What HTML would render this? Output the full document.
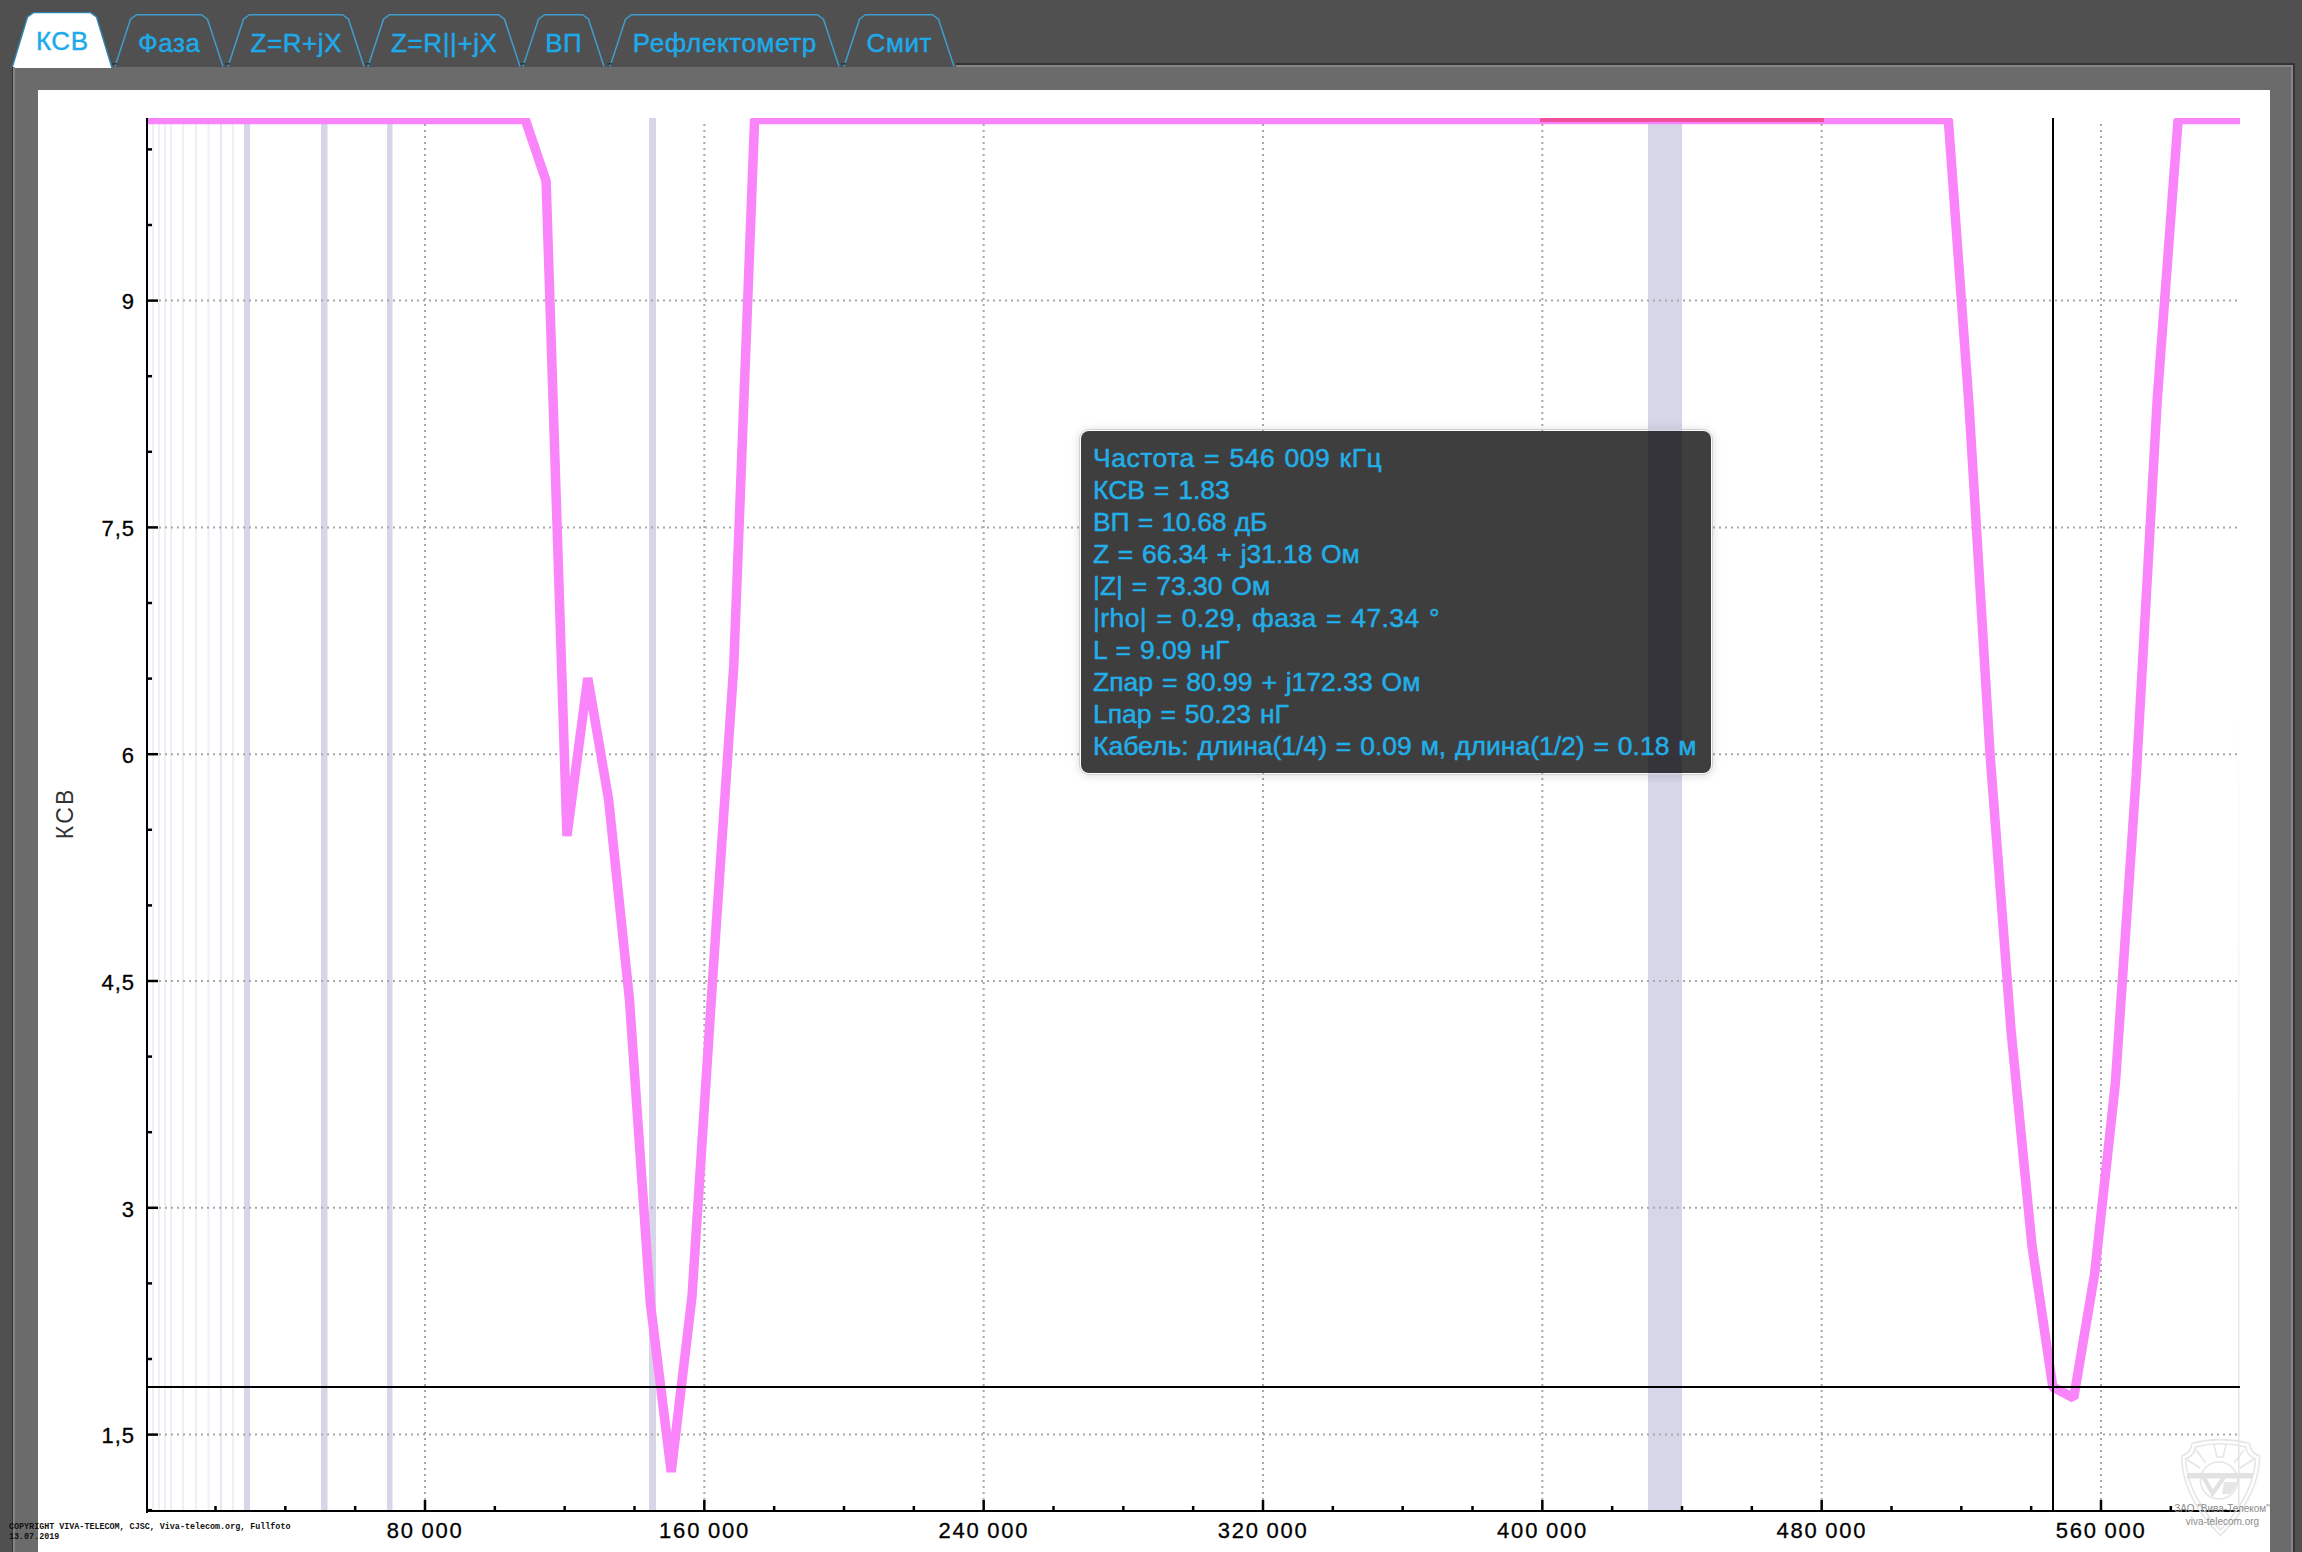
<!DOCTYPE html><html><head><meta charset="utf-8"><style>
html,body{margin:0;padding:0;background:#505050;width:2302px;height:1552px;overflow:hidden;}
svg{position:absolute;left:0;top:0;}
text{font-family:"Liberation Sans",sans-serif;}
#tip{position:absolute;left:1079px;top:429px;width:632px;height:344px;border:1px solid #d0d0d0;border-radius:10px;box-shadow:0 1px 10px rgba(0,0,0,0.14);}
#tipin{position:absolute;left:1px;top:1px;right:1px;bottom:1px;border-radius:8px;background:#3e3e3e;overflow:hidden;}
#tiptext{position:absolute;left:13px;top:12px;font-family:"Liberation Sans",sans-serif;font-size:26.5px;line-height:32px;word-spacing:1.5px;color:#22aee8;-webkit-text-stroke:0.5px #22aee8;white-space:pre;}
#copy{position:absolute;left:9px;top:1521.5px;font-family:"Liberation Mono",monospace;font-weight:bold;font-size:8.4px;line-height:10.5px;color:#111;white-space:pre;}
</style></head><body>
<svg width="2302" height="1552" viewBox="0 0 2302 1552">
<rect x="12" y="63" width="2283" height="1489" fill="#333"/>
<rect x="13" y="65" width="2280" height="1487" fill="#858585"/>
<rect x="15" y="67" width="2276" height="1485" fill="#6b6b6b"/>
<rect x="38" y="90" width="2232" height="1462" fill="#ffffff"/>
<rect x="12" y="60" width="944" height="7" fill="#505050"/>
<polygon points="12,68 27.5,17.0 33.5,12.6 90.5,12.6 96.5,17.0 112,68" fill="#ffffff"/>
<polyline points="12,68 27.5,17.0 33.5,12.6 90.5,12.6 96.5,17.0 112,68" fill="none" stroke="#2f86b0" stroke-width="1.4"/>
<text x="62.3" y="49.8" font-size="26" fill="#1eaaea" stroke="#1eaaea" stroke-width="0.45" letter-spacing="0.6" text-anchor="middle">КСВ</text>
<polyline points="115,66.5 130.5,19.2 136.5,14.7 201.5,14.7 207.5,19.2 223,66.5" fill="none" stroke="#3f9dcc" stroke-width="1.5"/>
<rect x="112" y="63" width="5" height="1.6" fill="#2a3a44"/>
<text x="169.3" y="51.7" font-size="26" fill="#1eaaea" stroke="#1eaaea" stroke-width="0.45" letter-spacing="0.6" text-anchor="middle">Фаза</text>
<polyline points="228,66.5 243.5,19.2 249.5,14.7 342.5,14.7 348.5,19.2 364,66.5" fill="none" stroke="#3f9dcc" stroke-width="1.5"/>
<rect x="225" y="63" width="5" height="1.6" fill="#2a3a44"/>
<text x="296.3" y="51.7" font-size="26" fill="#1eaaea" stroke="#1eaaea" stroke-width="0.45" letter-spacing="0.6" text-anchor="middle">Z=R+jX</text>
<polyline points="368,66.5 383.5,19.2 389.5,14.7 498.5,14.7 504.5,19.2 520,66.5" fill="none" stroke="#3f9dcc" stroke-width="1.5"/>
<rect x="365" y="63" width="5" height="1.6" fill="#2a3a44"/>
<text x="444.3" y="51.7" font-size="26" fill="#1eaaea" stroke="#1eaaea" stroke-width="0.45" letter-spacing="0.6" text-anchor="middle">Z=R&#124;&#124;+jX</text>
<polyline points="523,66.5 538.5,19.2 544.5,14.7 582.5,14.7 588.5,19.2 604,66.5" fill="none" stroke="#3f9dcc" stroke-width="1.5"/>
<rect x="520" y="63" width="5" height="1.6" fill="#2a3a44"/>
<text x="563.8" y="51.7" font-size="26" fill="#1eaaea" stroke="#1eaaea" stroke-width="0.45" letter-spacing="0.6" text-anchor="middle">ВП</text>
<polyline points="610,66.5 625.5,19.2 631.5,14.7 817.5,14.7 823.5,19.2 839,66.5" fill="none" stroke="#3f9dcc" stroke-width="1.5"/>
<rect x="607" y="63" width="5" height="1.6" fill="#2a3a44"/>
<text x="724.8" y="51.7" font-size="26" fill="#1eaaea" stroke="#1eaaea" stroke-width="0.45" letter-spacing="0.6" text-anchor="middle">Рефлектометр</text>
<polyline points="844,66.5 859.5,19.2 865.5,14.7 932.5,14.7 938.5,19.2 954,66.5" fill="none" stroke="#3f9dcc" stroke-width="1.5"/>
<rect x="841" y="63" width="5" height="1.6" fill="#2a3a44"/>
<text x="899.3" y="51.7" font-size="26" fill="#1eaaea" stroke="#1eaaea" stroke-width="0.45" letter-spacing="0.6" text-anchor="middle">Смит</text>
<rect x="956" y="63" width="1338" height="2" fill="#333"/>
<rect x="12" y="67" width="3" height="1485" fill="#333"/>
<rect x="13" y="67" width="2" height="1485" fill="#858585"/>
<rect x="152" y="118" width="2" height="1393" fill="#efeff6"/>
<rect x="158" y="118" width="2" height="1393" fill="#efeff6"/>
<rect x="164" y="118" width="2" height="1393" fill="#efeff6"/>
<rect x="170" y="118" width="2" height="1393" fill="#efeff6"/>
<rect x="182" y="118" width="2" height="1393" fill="#efeff6"/>
<rect x="195" y="118" width="2" height="1393" fill="#efeff6"/>
<rect x="207.5" y="118" width="2" height="1393" fill="#efeff6"/>
<rect x="220" y="118" width="2" height="1393" fill="#efeff6"/>
<rect x="232" y="118" width="2" height="1393" fill="#efeff6"/>
<rect x="220" y="118" width="2" height="1393" fill="#e6e6f0"/>
<rect x="244" y="118" width="6" height="1393" fill="#d6d6e8"/>
<rect x="321" y="118" width="6.5" height="1393" fill="#d6d6e8"/>
<rect x="387" y="118" width="5.5" height="1393" fill="#d6d6e8"/>
<rect x="649" y="118" width="7" height="1393" fill="#d6d6e8"/>
<rect x="1648" y="118" width="34" height="1393" fill="#d6d6e8"/>
<line x1="159" y1="300.60000000000014" x2="2238" y2="300.60000000000014" stroke="#a8a8a8" stroke-width="2" stroke-dasharray="2 4"/>
<line x1="159" y1="527.4000000000001" x2="2238" y2="527.4000000000001" stroke="#a8a8a8" stroke-width="2" stroke-dasharray="2 4"/>
<line x1="159" y1="754.2000000000002" x2="2238" y2="754.2000000000002" stroke="#a8a8a8" stroke-width="2" stroke-dasharray="2 4"/>
<line x1="159" y1="981.0000000000001" x2="2238" y2="981.0000000000001" stroke="#a8a8a8" stroke-width="2" stroke-dasharray="2 4"/>
<line x1="159" y1="1207.8000000000002" x2="2238" y2="1207.8000000000002" stroke="#a8a8a8" stroke-width="2" stroke-dasharray="2 4"/>
<line x1="159" y1="1434.6000000000001" x2="2238" y2="1434.6000000000001" stroke="#a8a8a8" stroke-width="2" stroke-dasharray="2 4"/>
<line x1="425.0" y1="124" x2="425.0" y2="1500" stroke="#a8a8a8" stroke-width="2" stroke-dasharray="2 4"/>
<line x1="704.3333333333333" y1="124" x2="704.3333333333333" y2="1500" stroke="#a8a8a8" stroke-width="2" stroke-dasharray="2 4"/>
<line x1="983.6666666666666" y1="124" x2="983.6666666666666" y2="1500" stroke="#a8a8a8" stroke-width="2" stroke-dasharray="2 4"/>
<line x1="1263.0" y1="124" x2="1263.0" y2="1500" stroke="#a8a8a8" stroke-width="2" stroke-dasharray="2 4"/>
<line x1="1542.3333333333333" y1="124" x2="1542.3333333333333" y2="1500" stroke="#a8a8a8" stroke-width="2" stroke-dasharray="2 4"/>
<line x1="1821.6666666666667" y1="124" x2="1821.6666666666667" y2="1500" stroke="#a8a8a8" stroke-width="2" stroke-dasharray="2 4"/>
<line x1="2101.0" y1="124" x2="2101.0" y2="1500" stroke="#a8a8a8" stroke-width="2" stroke-dasharray="2 4"/>
<defs><linearGradient id="rb" x1="0" y1="0" x2="0" y2="1"><stop offset="0" stop-color="#ffffff"/><stop offset="1" stop-color="#e2e2e2"/></linearGradient></defs>
<rect x="2238" y="700" width="1.5" height="811" fill="url(#rb)"/>
<defs><clipPath id="pc"><rect x="147" y="118" width="2093" height="1393"/></clipPath></defs>
<g clip-path="url(#pc)"><polyline points="147,119.5 525.25,119.5 546.1,181 566.95,836 587.8,678 608.65,800 629.5,1000 650.35,1303 671.2,1472 692.05,1296 712.9,975 733.75,666 754.6,119.5 1948.3,119.5 1969.2,408 1990.1,755 2011.0,1030 2031.9,1245 2052.8,1387 2073.7,1398 2094.6,1274 2115.4,1083 2136.3,775 2157.2,400 2178.1,119.5 2240,119.5" fill="none" stroke="#fa84fa" stroke-width="9.5" stroke-linejoin="bevel"/></g>
<rect x="1540" y="118" width="284" height="4" fill="#f24f9e"/>
<rect x="147" y="1386" width="2093" height="2" fill="#000"/>
<rect x="2052" y="118" width="2" height="1393" fill="#000"/>
<rect x="146" y="118" width="2" height="1395" fill="#000"/>
<rect x="146" y="1510" width="2094" height="2" fill="#000"/>
<rect x="147" y="1508.95" width="5" height="2.5" fill="#000"/>
<rect x="147" y="1433.3500000000001" width="11" height="2.5" fill="#000"/>
<rect x="147" y="1357.75" width="5" height="2.5" fill="#000"/>
<rect x="147" y="1282.15" width="5" height="2.5" fill="#000"/>
<rect x="147" y="1206.5500000000002" width="11" height="2.5" fill="#000"/>
<rect x="147" y="1130.9500000000003" width="5" height="2.5" fill="#000"/>
<rect x="147" y="1055.3500000000001" width="5" height="2.5" fill="#000"/>
<rect x="147" y="979.7500000000001" width="11" height="2.5" fill="#000"/>
<rect x="147" y="904.1500000000001" width="5" height="2.5" fill="#000"/>
<rect x="147" y="828.5500000000002" width="5" height="2.5" fill="#000"/>
<rect x="147" y="752.9500000000002" width="11" height="2.5" fill="#000"/>
<rect x="147" y="677.3500000000001" width="5" height="2.5" fill="#000"/>
<rect x="147" y="601.7500000000002" width="5" height="2.5" fill="#000"/>
<rect x="147" y="526.1500000000001" width="11" height="2.5" fill="#000"/>
<rect x="147" y="450.5500000000002" width="5" height="2.5" fill="#000"/>
<rect x="147" y="374.9500000000003" width="5" height="2.5" fill="#000"/>
<rect x="147" y="299.35000000000014" width="11" height="2.5" fill="#000"/>
<rect x="147" y="223.75000000000023" width="5" height="2.5" fill="#000"/>
<rect x="147" y="148.1500000000001" width="5" height="2.5" fill="#000"/>
<rect x="214.25" y="1506" width="2.5" height="5" fill="#000"/>
<rect x="284.08333333333337" y="1506" width="2.5" height="5" fill="#000"/>
<rect x="353.9166666666667" y="1506" width="2.5" height="5" fill="#000"/>
<rect x="423.75" y="1500" width="2.5" height="11" fill="#000"/>
<rect x="493.5833333333333" y="1506" width="2.5" height="5" fill="#000"/>
<rect x="563.4166666666666" y="1506" width="2.5" height="5" fill="#000"/>
<rect x="633.25" y="1506" width="2.5" height="5" fill="#000"/>
<rect x="703.0833333333333" y="1500" width="2.5" height="11" fill="#000"/>
<rect x="772.9166666666667" y="1506" width="2.5" height="5" fill="#000"/>
<rect x="842.75" y="1506" width="2.5" height="5" fill="#000"/>
<rect x="912.5833333333333" y="1506" width="2.5" height="5" fill="#000"/>
<rect x="982.4166666666666" y="1500" width="2.5" height="11" fill="#000"/>
<rect x="1052.25" y="1506" width="2.5" height="5" fill="#000"/>
<rect x="1122.0833333333335" y="1506" width="2.5" height="5" fill="#000"/>
<rect x="1191.9166666666665" y="1506" width="2.5" height="5" fill="#000"/>
<rect x="1261.75" y="1500" width="2.5" height="11" fill="#000"/>
<rect x="1331.5833333333335" y="1506" width="2.5" height="5" fill="#000"/>
<rect x="1401.4166666666665" y="1506" width="2.5" height="5" fill="#000"/>
<rect x="1471.25" y="1506" width="2.5" height="5" fill="#000"/>
<rect x="1541.0833333333333" y="1500" width="2.5" height="11" fill="#000"/>
<rect x="1610.9166666666667" y="1506" width="2.5" height="5" fill="#000"/>
<rect x="1680.75" y="1506" width="2.5" height="5" fill="#000"/>
<rect x="1750.5833333333333" y="1506" width="2.5" height="5" fill="#000"/>
<rect x="1820.4166666666667" y="1500" width="2.5" height="11" fill="#000"/>
<rect x="1890.25" y="1506" width="2.5" height="5" fill="#000"/>
<rect x="1960.0833333333333" y="1506" width="2.5" height="5" fill="#000"/>
<rect x="2029.9166666666667" y="1506" width="2.5" height="5" fill="#000"/>
<rect x="2099.75" y="1500" width="2.5" height="11" fill="#000"/>
<rect x="2169.583333333333" y="1506" width="2.5" height="5" fill="#000"/>
<text x="135" y="309.40000000000015" font-size="22" fill="#000" stroke="#000" stroke-width="0.3" letter-spacing="1" text-anchor="end">9</text>
<text x="135" y="536.2" font-size="22" fill="#000" stroke="#000" stroke-width="0.3" letter-spacing="1" text-anchor="end">7,5</text>
<text x="135" y="763.0000000000001" font-size="22" fill="#000" stroke="#000" stroke-width="0.3" letter-spacing="1" text-anchor="end">6</text>
<text x="135" y="989.8000000000001" font-size="22" fill="#000" stroke="#000" stroke-width="0.3" letter-spacing="1" text-anchor="end">4,5</text>
<text x="135" y="1216.6000000000001" font-size="22" fill="#000" stroke="#000" stroke-width="0.3" letter-spacing="1" text-anchor="end">3</text>
<text x="135" y="1443.4" font-size="22" fill="#000" stroke="#000" stroke-width="0.3" letter-spacing="1" text-anchor="end">1,5</text>
<text x="425.2" y="1537.5" font-size="22" fill="#000" stroke="#000" stroke-width="0.3" letter-spacing="1.8" word-spacing="-1.2" text-anchor="middle">80 000</text>
<text x="704.5333333333333" y="1537.5" font-size="22" fill="#000" stroke="#000" stroke-width="0.3" letter-spacing="1.8" word-spacing="-1.2" text-anchor="middle">160 000</text>
<text x="983.8666666666667" y="1537.5" font-size="22" fill="#000" stroke="#000" stroke-width="0.3" letter-spacing="1.8" word-spacing="-1.2" text-anchor="middle">240 000</text>
<text x="1263.2" y="1537.5" font-size="22" fill="#000" stroke="#000" stroke-width="0.3" letter-spacing="1.8" word-spacing="-1.2" text-anchor="middle">320 000</text>
<text x="1542.5333333333333" y="1537.5" font-size="22" fill="#000" stroke="#000" stroke-width="0.3" letter-spacing="1.8" word-spacing="-1.2" text-anchor="middle">400 000</text>
<text x="1821.8666666666668" y="1537.5" font-size="22" fill="#000" stroke="#000" stroke-width="0.3" letter-spacing="1.8" word-spacing="-1.2" text-anchor="middle">480 000</text>
<text x="2101.2" y="1537.5" font-size="22" fill="#000" stroke="#000" stroke-width="0.3" letter-spacing="1.8" word-spacing="-1.2" text-anchor="middle">560 000</text>
<text x="0" y="0" font-size="23" fill="#333" letter-spacing="2.2" text-anchor="middle" transform="translate(73,813.3) rotate(-90)">КСВ</text>
<g fill="none" stroke="#e6e6e6" stroke-width="1.6">
<path d="M2192,1443.3 Q2220.4,1436 2249.4,1443.3 Q2250.5,1453 2259.7,1456 Q2259,1497 2220.4,1535.5 Q2182,1497 2181.7,1456 Q2191,1453 2192,1443.3 Z"/>
<path d="M2195.5,1447 Q2220.4,1440.5 2245.9,1447 Q2247,1456 2255.5,1459 Q2254,1494 2220.4,1530 Q2187,1494 2185.5,1459 Q2194,1456 2195.5,1447 Z"/>
<circle cx="2219" cy="1480.5" r="18.5"/>
<path d="M2214,1445 L2217,1457 L2223,1457 L2226,1445 M2196,1450 L2206,1463 M2244,1450 L2234,1463 M2186,1459 L2200,1468 M2254,1459 L2240,1468"/>
</g>
<rect x="2187" y="1473" width="66" height="5.5" fill="#e2e2e2"/>
<path d="M2203,1476 L2212.5,1493.5 L2225,1476" stroke="#e2e2e2" stroke-width="4.2" fill="none"/>
<path d="M2224,1482 L2240,1482 L2230,1494 L2222,1494 Z" fill="#e6e6e6"/>
<text x="2222" y="1512.4" font-size="10" fill="#8c8c8c" text-anchor="middle">ЗАО "Вива-Телеком"</text>
<text x="2222.4" y="1524.5" font-size="10" fill="#8c8c8c" text-anchor="middle">viva-telecom.org</text>
</svg>
<div id="tip"><div id="tipin"><div style="position:absolute;left:567px;top:0;width:34px;height:100%;background:#35343b"></div></div><div id="tiptext"><span style="letter-spacing:0.5px">Частота = 546 009 кГц</span>
КСВ = 1.83
<span style="letter-spacing:-0.3px">ВП = 10.68 дБ</span>
<span style="letter-spacing:-0.1px">Z = 66.34 + j31.18 Ом</span>
|Z| = 73.30 Ом
<span style="letter-spacing:0.42px">|rho| = 0.29, фаза = 47.34 °</span>
L = 9.09 нГ
Zпар = 80.99 + j172.33 Ом
Lпар = 50.23 нГ
Кабель: длина(1/4) = 0.09 м, длина(1/2) = 0.18 м</div></div>
<div id="copy">COPYRIGHT VIVA-TELECOM, CJSC, Viva-telecom.org, Fullfoto
13.07.2019</div>
</body></html>
